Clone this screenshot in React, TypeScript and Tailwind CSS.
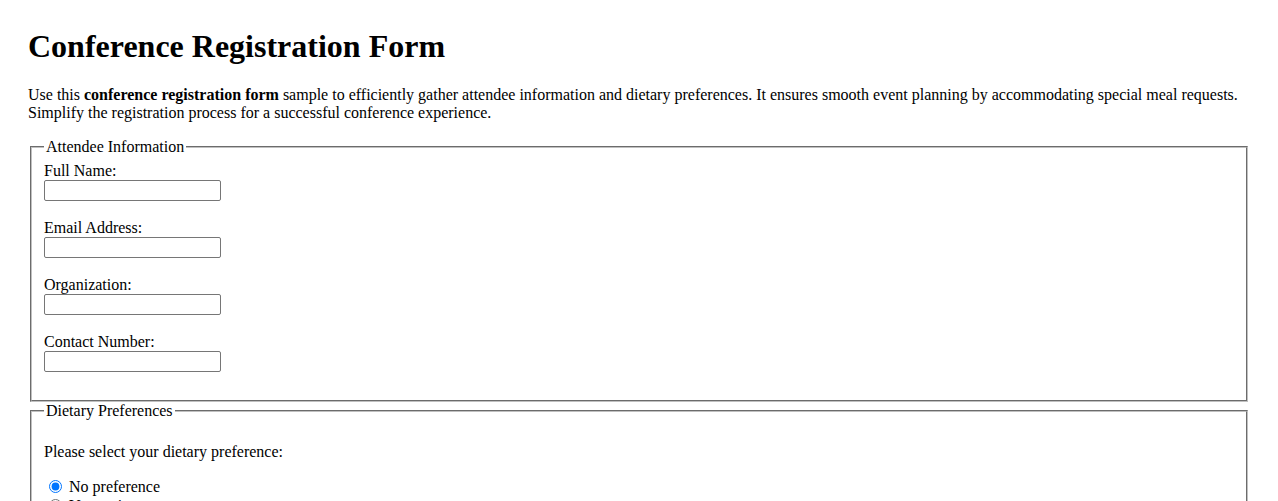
import React from 'react';

const fields = [
  { id: 'fullName', label: 'Full Name:', type: 'text' },
  { id: 'email', label: 'Email Address:', type: 'email' },
  { id: 'organization', label: 'Organization:', type: 'text' },
  { id: 'contact', label: 'Contact Number:', type: 'tel' },
];

const diets = ['No preference', 'Vegetarian', 'Vegan', 'Gluten-free', 'Other'];

export default function App() {
  return (
    <div className="min-h-screen bg-white px-[28px] pt-[28px] pb-8 text-black font-['Liberation_Serif','Times_New_Roman',serif] text-[16px] leading-[normal]">
      <h1 className="text-[32px] font-bold leading-[37px] mb-[21px]">Conference Registration Form</h1>
      <p className="mb-4">
        Use this <strong>conference registration form</strong> sample to efficiently gather attendee information and
        dietary preferences. It ensures smooth event planning by accommodating special meal requests. Simplify the
        registration process for a successful conference experience.
      </p>

      <form>
        <fieldset className="mx-[2px] border-2 border-[#c0c0c0] [border-style:groove] px-3 pt-[5.6px] pb-[10px]">
          <legend className="px-[2px]">Attendee Information</legend>
          {fields.map((f) => (
            <div key={f.id} className="mb-[18px]">
              <label htmlFor={f.id} className="block h-[18px]">
                {f.label}
              </label>
              <input
                id={f.id}
                name={f.id}
                type={f.type}
                className="block w-[177px] h-[21px] border border-[#767676] rounded-[2px] px-[2px] text-[13.33px] font-['Liberation_Sans',Arial,sans-serif] bg-white"
              />
            </div>
          ))}
        </fieldset>

        <fieldset className="mx-[2px] border-2 border-[#c0c0c0] [border-style:groove] px-3 pt-[5.6px] pb-[10px]">
          <legend className="px-[2px]">Dietary Preferences</legend>
          <p className="mt-[18px] mb-4">Please select your dietary preference:</p>
          {diets.map((d, i) => (
            <div key={d} className="flex items-start h-[19px]">
              <input
                type="radio"
                id={`diet-${i}`}
                name="diet"
                value={d}
                defaultChecked={i === 0}
                className="w-[13px] h-[13px] ml-[5px] mr-[3px] mt-[3px]"
              />
              <label htmlFor={`diet-${i}`} className="ml-[4px] mt-[1px]">
                {d}
              </label>
            </div>
          ))}
        </fieldset>
      </form>
    </div>
  );
}
